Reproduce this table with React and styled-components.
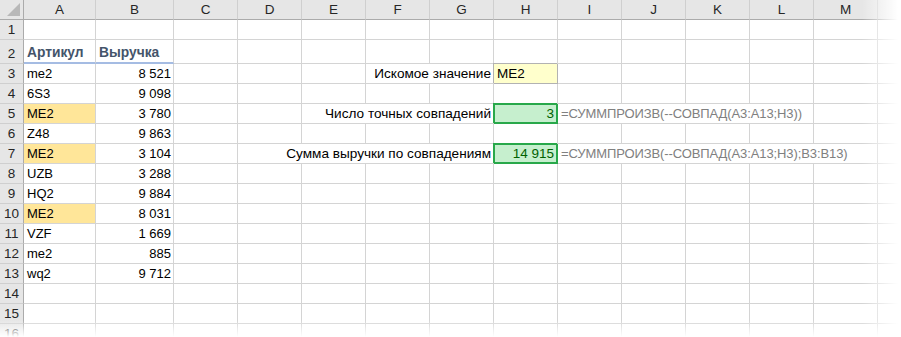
import React from 'react'
import styled, { createGlobalStyle, css } from 'styled-components'

const GRID = '#d4d4d4'
const HEAD_BG = '#e6e6e6'
const HEAD_EDGE = '#ababab'

const columns = [
    { key: 'A', w: 72 },
    { key: 'B', w: 78 },
    { key: 'C', w: 64 },
    { key: 'D', w: 64 },
    { key: 'E', w: 64 },
    { key: 'F', w: 64 },
    { key: 'G', w: 64 },
    { key: 'H', w: 64 },
    { key: 'I', w: 64 },
    { key: 'J', w: 64 },
    { key: 'K', w: 64 },
    { key: 'L', w: 64 },
    { key: 'M', w: 64 },
    { key: '', w: 60 }
]

const articles = [
    ['me2', '8 521'],
    ['6S3', '9 098'],
    ['ME2', '3 780', true],
    ['Z48', '9 863'],
    ['ME2', '3 104', true],
    ['UZB', '3 288'],
    ['HQ2', '9 884'],
    ['ME2', '8 031', true],
    ['VZF', '1 669'],
    ['me2', '885'],
    ['wq2', '9 712']
]

// cells keyed by row number, each one: column, span, text, tone, align
const buildCells = () => {
    const rows = {}
    rows[2] = [
        { col: 'A', text: 'Артикул', tone: 'heading' },
        { col: 'B', text: 'Выручка', tone: 'heading' }
    ]
    articles.forEach(([code, sum, hit], i) => {
        rows[i + 3] = [
            { col: 'A', text: code, tone: hit ? 'gold' : undefined },
            { col: 'B', text: sum, align: 'right' }
        ]
    })
    rows[3].push(
        { col: 'F', span: 2, text: 'Искомое значение', align: 'right', tone: 'label' },
        { col: 'H', text: 'ME2', tone: 'input' }
    )
    rows[5].push(
        { col: 'E', span: 3, text: 'Число точных совпадений', align: 'right', tone: 'label' },
        { col: 'H', text: '3', tone: 'good', align: 'right' },
        { col: 'I', span: 4, text: '=СУММПРОИЗВ(--СОВПАД(A3:A13;H3))', tone: 'formula' }
    )
    rows[7].push(
        { col: 'D', span: 4, text: 'Сумма выручки по совпадениям', align: 'right', tone: 'label' },
        { col: 'H', text: '14 915', tone: 'good', align: 'right' },
        { col: 'I', span: 5, text: '=СУММПРОИЗВ(--СОВПАД(A3:A13;H3);B3:B13)', tone: 'formula' }
    )
    return rows
}

const ROW_COUNT = 16
const rowHeights = Array.from({ length: ROW_COUNT }, (_, i) => (i === 1 ? 24 : 20))

const GlobalStyle = createGlobalStyle`
    html, body {
        margin: 0;
        padding: 0;
        background: #fff;
        overflow: hidden;
    }
    body {
        font-family: "Liberation Sans", Arial, sans-serif;
        font-size: 13px;
        color: #000;
    }
`

const Frame = styled.div`
    position: relative;
    width: 901px;
    height: 337px;
    overflow: hidden;
    background: #fff;
`

const Sheet = styled.div`
    display: grid;
    grid-template-columns: 24px ${columns.map(c => `${c.w}px`).join(' ')};
    grid-template-rows: 20px ${rowHeights.map(h => `${h}px`).join(' ')};
`

const Corner = styled.div`
    position: relative;
    background: ${HEAD_BG};
    border-right: 1px solid ${HEAD_EDGE};
    border-bottom: 1px solid ${HEAD_EDGE};
    box-sizing: border-box;
    &::after {
        content: '';
        position: absolute;
        right: 3px;
        bottom: 3px;
        width: 0;
        height: 0;
        border-left: 13px solid transparent;
        border-bottom: 13px solid #b8b8b8;
    }
`

const ColHead = styled.div`
    display: flex;
    align-items: center;
    justify-content: center;
    background: ${HEAD_BG};
    border-right: 1px solid #cfcfcf;
    border-bottom: 1px solid ${HEAD_EDGE};
    box-sizing: border-box;
    color: #262626;
    font-size: 13.5px;
`

const RowHead = styled.div`
    display: flex;
    align-items: flex-end;
    justify-content: center;
    padding-bottom: 2px;
    background: ${HEAD_BG};
    border-right: 1px solid ${HEAD_EDGE};
    border-bottom: 1px solid #cfcfcf;
    box-sizing: border-box;
    color: #262626;
    font-size: 13.5px;
`

const tones = {
    heading: css`
        color: #44546a;
        font-weight: bold;
        font-size: 13.8px;
        border-bottom: 2px solid #a5bce3;
    `,
    label: css`
        font-size: 13.6px;
    `,
    gold: css`
        background: #ffe699;
    `,
    input: css`
        background: #ffffcc;
        border-right-color: #b2b2b2;
        border-bottom-color: #b2b2b2;
        box-shadow: -1px -1px 0 #b2b2b2;
        position: relative;
        z-index: 1;
        font-size: 13.5px;
    `,
    good: css`
        background: #c6efce;
        color: #006100;
        border-right-color: #28a84a;
        border-bottom-color: #28a84a;
        box-shadow: -1px -1px 0 #28a84a, inset 1px 1px 0 #28a84a, inset -1px -1px 0 #28a84a;
        position: relative;
        z-index: 1;
        padding-right: 3px;
        font-size: 13.5px;
    `,
    formula: css`
        color: #808080;
        letter-spacing: -0.1px;
    `
}

const Cell = styled.div`
    grid-column: span ${p => p.$span || 1};
    display: flex;
    align-items: flex-end;
    justify-content: ${p => (p.$align === 'right' ? 'flex-end' : 'flex-start')};
    padding: 0 2px 2px 3px;
    border-right: 1px solid ${GRID};
    border-bottom: 1px solid ${GRID};
    box-sizing: border-box;
    white-space: nowrap;
    overflow: visible;
    line-height: 15px;
    ${p => p.$tone && tones[p.$tone]}
`

// soft fade along the right and bottom edges of the capture
const Fade = styled.div`
    position: absolute;
    inset: 0;
    pointer-events: none;
    z-index: 5;
    background:
        linear-gradient(to right, rgba(255, 255, 255, 0) 862px, #fff 898px),
        linear-gradient(to bottom, rgba(255, 255, 255, 0) 320px, #fff 337px);
`

const SheetRow = ({ n, cells }) => {
    const out = [<RowHead key='h'>{n}</RowHead>]
    let i = 0
    while (i < columns.length) {
        const col = columns[i]
        const cell = cells.find(c => c.col === col.key && col.key)
        if (cell) {
            const span = cell.span || 1
            out.push(
                <Cell key={col.key} $span={span} $tone={cell.tone} $align={cell.align}>
                    {cell.text}
                </Cell>
            )
            i += span
        } else {
            out.push(<Cell key={col.key || 'x'} />)
            i += 1
        }
    }
    return out
}

export default function App() {
    const cells = buildCells()
    return (
        <Frame>
            <GlobalStyle />
            <Sheet>
                <Corner />
                {columns.map(c => <ColHead key={c.key || 'x'}>{c.key}</ColHead>)}
                {rowHeights.map((_, i) => (
                    <SheetRow key={i} n={i + 1} cells={cells[i + 1] || []} />
                ))}
            </Sheet>
            <Fade />
        </Frame>
    )
}
